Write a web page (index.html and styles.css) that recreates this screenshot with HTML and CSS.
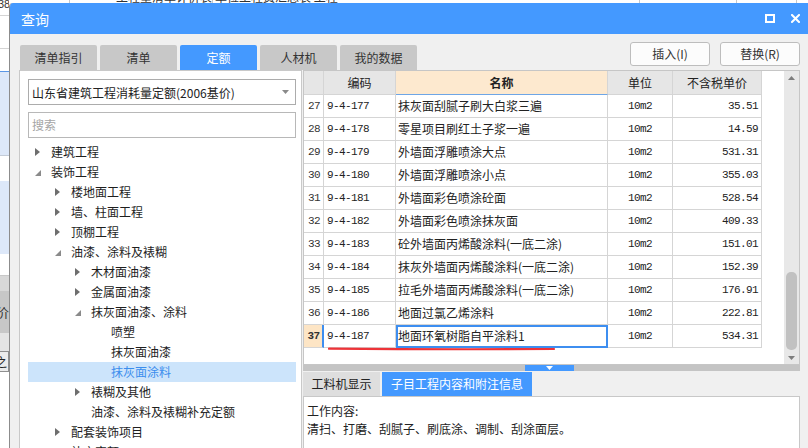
FILE: index.html
```html
<!DOCTYPE html>
<html lang="zh-CN">
<head>
<meta charset="utf-8">
<title>查询</title>
<link rel="stylesheet" href="styles.css">
</head>
<body>
<div class="app">
  <div class="bg-left">
    <div class="bl bl-num"><span>38</span></div>
    <div class="bl bl-a"></div>
    <div class="bl bl-b"></div>
    <div class="bl bl-blue1"></div>
    <div class="bl bl-c"></div>
    <div class="bl bl-blue2"></div>
    <div class="bl bl-d"></div>
    <div class="bl bl-e"></div>
    <div class="bl bl-f"><span>价</span></div>
    <div class="bl bl-g"></div>
    <div class="bl bl-h"><span>之</span></div>
    <div class="bl bl-rest"></div>
  </div>
  <div class="bg-top">
    <div class="bt bt-1"></div>
    <div class="bt bt-2"><span>工程量清单计价表</span></div>
    <div class="bt bt-3"><span>单位工程费汇总表 工程</span></div>
    <div class="bt bt-4"></div>
    <div class="bt bt-5"></div>
  </div>

  <div class="dialog">
    <div class="titlebar">
      <span class="title">查询</span>
      <span class="ico-max"></span>
      <svg class="ico-close" width="9" height="9" viewBox="0 0 9 9"><path d="M1 1 L8 8 M8 1 L1 8" stroke="#fff" stroke-width="2" stroke-linecap="square"/></svg>
    </div>
    <div class="dlg-body">
      <div class="toolbar">
        <div class="tabs">
          <div class="tab">清单指引</div>
          <div class="tab">清单</div>
          <div class="tab active">定额</div>
          <div class="tab">人材机</div>
          <div class="tab">我的数据</div>
        </div>
        <div class="actions">
          <button class="btn">插入(I)</button>
          <button class="btn">替换(R)</button>
        </div>
      </div>
      <div class="main">
        <div class="left-panel">
          <div class="combo">
            <span>山东省建筑工程消耗量定额(2006基价)</span>
            <svg width="7" height="4" viewBox="0 0 7 4"><path d="M0 0 H7 L3.5 4 Z" fill="#8a8a8a"/></svg>
          </div>
          <div class="search">搜索</div>
          <ul class="tree">
            <li class="l0"><span class="tw"><svg class="tri-c" width="5" height="8" viewBox="0 0 5 8"><path d="M0 0 L5 4 L0 8 Z"/></svg></span>建筑工程</li>
            <li class="l0"><span class="tw"><svg class="tri-e" width="6" height="6" viewBox="0 0 6 6"><path d="M6 0 L6 6 L0 6 Z"/></svg></span>装饰工程</li>
            <li class="l1"><span class="tw"><svg class="tri-c" width="5" height="8" viewBox="0 0 5 8"><path d="M0 0 L5 4 L0 8 Z"/></svg></span>楼地面工程</li>
            <li class="l1"><span class="tw"><svg class="tri-c" width="5" height="8" viewBox="0 0 5 8"><path d="M0 0 L5 4 L0 8 Z"/></svg></span>墙、柱面工程</li>
            <li class="l1"><span class="tw"><svg class="tri-c" width="5" height="8" viewBox="0 0 5 8"><path d="M0 0 L5 4 L0 8 Z"/></svg></span>顶棚工程</li>
            <li class="l1"><span class="tw"><svg class="tri-e" width="6" height="6" viewBox="0 0 6 6"><path d="M6 0 L6 6 L0 6 Z"/></svg></span>油漆、涂料及裱糊</li>
            <li class="l2"><span class="tw"><svg class="tri-c" width="5" height="8" viewBox="0 0 5 8"><path d="M0 0 L5 4 L0 8 Z"/></svg></span>木材面油漆</li>
            <li class="l2"><span class="tw"><svg class="tri-c" width="5" height="8" viewBox="0 0 5 8"><path d="M0 0 L5 4 L0 8 Z"/></svg></span>金属面油漆</li>
            <li class="l2"><span class="tw"><svg class="tri-e" width="6" height="6" viewBox="0 0 6 6"><path d="M6 0 L6 6 L0 6 Z"/></svg></span>抹灰面油漆、涂料</li>
            <li class="l3"><span class="tw"></span>喷塑</li>
            <li class="l3"><span class="tw"></span>抹灰面油漆</li>
            <li class="l3 selected"><span class="tw"></span>抹灰面涂料</li>
            <li class="l2"><span class="tw"><svg class="tri-c" width="5" height="8" viewBox="0 0 5 8"><path d="M0 0 L5 4 L0 8 Z"/></svg></span>裱糊及其他</li>
            <li class="l2"><span class="tw"></span>油漆、涂料及裱糊补充定额</li>
            <li class="l1"><span class="tw"><svg class="tri-c" width="5" height="8" viewBox="0 0 5 8"><path d="M0 0 L5 4 L0 8 Z"/></svg></span>配套装饰项目</li>
            <li class="l1"><span class="tw"></span>补充定额</li>
          </ul>
        </div>
        <div class="right">
          <div class="grid-panel">
            <div class="grid">
              <div class="c h"></div>
              <div class="c h">编码</div>
              <div class="c h hname">名称</div>
              <div class="c h">单位</div>
              <div class="c h">不含税单价</div>

              <div class="c num">27</div><div class="c code">9-4-177</div><div class="c nm">抹灰面刮腻子刷大白浆三遍</div><div class="c unit">10m2</div><div class="c price">35.51</div>
              <div class="c num">28</div><div class="c code">9-4-178</div><div class="c nm">零星项目刷红土子浆一遍</div><div class="c unit">10m2</div><div class="c price">14.59</div>
              <div class="c num">29</div><div class="c code">9-4-179</div><div class="c nm">外墙面浮雕喷涂大点</div><div class="c unit">10m2</div><div class="c price">531.31</div>
              <div class="c num">30</div><div class="c code">9-4-180</div><div class="c nm">外墙面浮雕喷涂小点</div><div class="c unit">10m2</div><div class="c price">355.03</div>
              <div class="c num">31</div><div class="c code">9-4-181</div><div class="c nm">外墙面彩色喷涂砼面</div><div class="c unit">10m2</div><div class="c price">528.54</div>
              <div class="c num">32</div><div class="c code">9-4-182</div><div class="c nm">外墙面彩色喷涂抹灰面</div><div class="c unit">10m2</div><div class="c price">409.33</div>
              <div class="c num">33</div><div class="c code">9-4-183</div><div class="c nm">砼外墙面丙烯酸涂料(一底二涂)</div><div class="c unit">10m2</div><div class="c price">151.01</div>
              <div class="c num">34</div><div class="c code">9-4-184</div><div class="c nm">抹灰外墙面丙烯酸涂料(一底二涂)</div><div class="c unit">10m2</div><div class="c price">152.39</div>
              <div class="c num">35</div><div class="c code">9-4-185</div><div class="c nm">拉毛外墙面丙烯酸涂料(一底二涂)</div><div class="c unit">10m2</div><div class="c price">176.91</div>
              <div class="c num">36</div><div class="c code">9-4-186</div><div class="c nm">地面过氯乙烯涂料</div><div class="c unit">10m2</div><div class="c price">222.81</div>
              <div class="c num cur">37</div><div class="c code">9-4-187</div><div class="c nm cur-cell">地面环氧树脂自平涂料1</div><div class="c unit">10m2</div><div class="c price">534.31</div>
            </div>
            <div class="filler"></div>
            <div class="vscroll">
              <div class="sb-btn sb-up"><svg width="7" height="4" viewBox="0 0 7 4"><path d="M0 4 H7 L3.5 0 Z" fill="#7d7d7d"/></svg></div>
              <div class="sb-track"><div class="sb-thumb"></div></div>
              <div class="sb-btn sb-down"><svg width="7" height="4" viewBox="0 0 7 4"><path d="M0 0 H7 L3.5 4 Z" fill="#7d7d7d"/></svg></div>
            </div>
            <svg class="annot" width="228" height="4" viewBox="0 0 228 4"><path d="M1 1.6 Q 110 2.6 226 2.0" stroke="#ee3338" stroke-width="2.2" fill="none" stroke-linecap="round"/></svg>
          </div>
          <div class="splitter"><span class="handle"><svg width="7" height="4" viewBox="0 0 7 4"><path d="M0 0 H7 L3.5 4 Z" fill="#fff"/></svg></span></div>
          <div class="btabs">
            <div class="btab">工料机显示</div>
            <div class="btab active">子目工程内容和附注信息</div>
          </div>
          <div class="bcontent">
            <p>工作内容:</p>
            <p>清扫、打磨、刮腻子、刷底涂、调制、刮涂面层。</p>
          </div>
        </div>
      </div>
    </div>
  </div>
</div>
</body>
</html>
```

FILE: styles.css
```css
* { box-sizing: border-box; margin: 0; padding: 0; }
html, body { width: 808px; height: 448px; overflow: hidden; }
body {
  font-family: "Noto Sans CJK SC", "Noto Sans", sans-serif;
  font-size: 12px;
  color: #222;
  background: #fff;
}

.app {
  position: relative;
  width: 808px;
  height: 448px;
  display: grid;
  grid-template-columns: 9px 1fr;
  grid-template-rows: 3px 1fr;
  overflow: hidden;
}

/* background application (behind the dialog) */
.bg-left { grid-row: 1 / 3; grid-column: 1; display: flex; flex-direction: column; overflow: hidden; }
.bl { flex: none; overflow: hidden; }
.bl-num { height: 16px; border-bottom: 1px solid #d4d4d4; font-family: "Liberation Sans", sans-serif; font-size: 11px; line-height: 8px; color: #333; }
.bl-num span { margin-left: -2px; }
.bl-a { height: 33px; border-bottom: 1px solid #d4d4d4; }
.bl-b { height: 23px; border-bottom: 1px solid #5a96e6; }
.bl-blue1 { height: 84px; background: #dde8f9; border-bottom: 1px solid #c4ccd8; }
.bl-c { height: 25px; }
.bl-blue2 { height: 73px; background: #dde8f9; }
.bl-d { height: 22px; border-bottom: 1px solid #c8c8c8; }
.bl-e { height: 15px; background: #d8d8d8; }
.bl-f { height: 42px; background: #c7c7c7; font-size: 13px; line-height: 42px; color: #333; }
.bl-f span { margin-left: -4px; }
.bl-g { height: 18px; background: #e4e4e4; }
.bl-h { height: 21px; background: #ececec; border: 1px solid #8f8f8f; border-left: none; font-size: 12px; line-height: 19px; }
.bl-h span { margin-left: -5px; }
.bl-rest { flex: 1; }

.bg-top { grid-row: 1; grid-column: 2; display: flex; overflow: hidden; }
.bt { flex: none; height: 3px; overflow: hidden; border-right: 1px solid #c8c8c8; font-size: 12px; line-height: 12px; color: #333; }
.bt span { display: block; margin-top: -9px; white-space: nowrap; padding-left: 2px; }
.bt-1 { width: 61px; }
.bt-2 { width: 143px; padding-left: 44px; }
.bt-3 { width: 427px; }
.bt-4 { width: 97px; }
.bt-5 { width: 60px; }

/* dialog */
.dialog {
  position: absolute;
  left: 9px;
  top: 3px;
  width: 800px;
  height: 460px;
  background: #f0f0f0;
  border-left: 1px solid #8c8c8c;
  border-top-left-radius: 4px;
  display: flex;
  flex-direction: column;
  overflow: hidden;
}
.titlebar {
  height: 31px;
  flex: none;
  background: #4499ff;
  color: #fff;
  display: flex;
  align-items: center;
  padding: 0 9px 0 11px;
}
.title { flex: 1; font-size: 14px; line-height: 31px; padding-top: 2px; }
.ico-max { width: 10px; height: 9px; border: 2px solid #fff; margin-right: 16px; }
.ico-close { display: block; }

.dlg-body { flex: 1; min-height: 0; display: flex; flex-direction: column; padding: 0 9px; }
.toolbar { height: 36px; flex: none; display: flex; justify-content: space-between; align-items: flex-start; }
.tabs { display: flex; gap: 3px; margin-top: 11px; padding-left: 1px; }
.tab {
  width: 77px;
  height: 25px;
  line-height: 25px;
  text-align: center;
  background: #c8c8c8;
  color: #333;
  border-radius: 2px 2px 0 0;
}
.tab.active { background: #4499ff; color: #fff; }
.actions { display: flex; gap: 10px; margin-top: 8px; }
.btn {
  width: 80px;
  height: 24px;
  border: 1px solid #bdbdbd;
  border-radius: 3px;
  background: #fcfcfc;
  font-family: inherit;
  font-size: 12px;
  color: #333;
  line-height: 22px;
  text-align: center;
}

.main { flex: 1; min-height: 0; display: flex; gap: 1px; }

/* left tree panel */
.left-panel {
  width: 283px;
  flex: none;
  background: #fff;
  border: 1px solid #c9c9c9;
  padding: 8px 5px 0 8px;
}
.combo {
  height: 26px;
  border: 1px solid #acacac;
  display: flex;
  align-items: center;
  justify-content: space-between;
  padding: 0 6px 0 3px;
  color: #222;
  white-space: nowrap;
}
.search {
  height: 26px;
  margin-top: 7px;
  border: 1px solid #b8b8b8;
  color: #a5a5a5;
  line-height: 24px;
  padding-left: 3px;
}
.tree { list-style: none; margin-top: 4px; }
.tree li { height: 20px; line-height: 20px; display: flex; align-items: center; white-space: nowrap; color: #1e1e1e; }
.tree .l1 { padding-left: 20px; }
.tree .l2 { padding-left: 40px; }
.tree .l3 { padding-left: 60px; }
.tree li.selected { background: #cce4fb; color: #3b8ded; }
.tw { width: 23px; height: 20px; flex: none; display: flex; align-items: center; padding-left: 7px; }
.tri-c { fill: #6e6e6e; display: block; }
.tri-e { fill: #8a8a8a; display: block; margin-top: 1px; }

/* right side */
.right { width: 497px; flex: none; display: flex; flex-direction: column; }
.grid-panel {
  position: relative;
  height: 295px;
  flex: none;
  background: #fff;
  border: 1px solid #c6c6c6;
  display: flex;
}
.grid {
  width: 458px;
  flex: none;
  display: grid;
  grid-template-columns: 20px 72px 212px 65px 89px;
  grid-template-rows: 24px;
  grid-auto-rows: 23px;
  align-content: start;
}
.c {
  border-right: 1px solid #d5d5d5;
  border-bottom: 1px solid #d5d5d5;
  overflow: hidden;
  white-space: nowrap;
  line-height: 22px;
}
.h { background: #e6e6e6; text-align: center; line-height: 23px; color: #222; }
.h.hname { background: #fde9cf; font-weight: bold; border-bottom-color: #6ea6e6; }
.num, .code, .unit, .price {
  font-family: "Liberation Mono", "DejaVu Sans Mono", monospace;
  font-size: 11px;
  letter-spacing: -0.6px;
  color: #222;
}
.num { text-align: center; color: #333; padding-left: 1px; }
.code { padding-left: 3px; }
.nm { padding-left: 2px; }
.unit { text-align: center; }
.price { text-align: right; padding-right: 3px; }
.num.cur { background: #fde5c5; font-weight: bold; border-right-color: #3d8ef0; border-right-width: 2px; }
.cur-cell { outline: 2px solid #3d8ef0; outline-offset: -2px; }
.filler { flex: 1; }

.vscroll { width: 15px; flex: none; background: #e8e8e8; display: flex; flex-direction: column; }
.sb-btn { flex: none; display: flex; align-items: center; justify-content: center; }
.sb-up { height: 14px; }
.sb-down { height: 12px; }
.sb-track { flex: 1; }
.sb-thumb { margin: 187px 2px 0; height: 78px; border-radius: 5px; background: #c1c1c1; }

.annot { position: absolute; left: 24px; top: 276px; display: block; }

.splitter { height: 6px; flex: none; background: #c4c4c4; display: flex; }
.handle { margin-left: 222px; width: 49px; background: #4499ff; display: flex; align-items: center; justify-content: center; }
.handle svg { display: block; }

.btabs { display: flex; gap: 2px; margin-top: 1px; height: 24px; flex: none; }
.btab { width: 77px; background: #dedede; text-align: center; line-height: 24px; color: #222; }
.btab.active { width: 150px; background: #4499ff; color: #fff; }

.bcontent {
  flex: 1;
  background: #fff;
  border: 1px solid #c8c8c8;
  padding: 5px 3px;
  line-height: 18px;
  color: #222;
}
```
